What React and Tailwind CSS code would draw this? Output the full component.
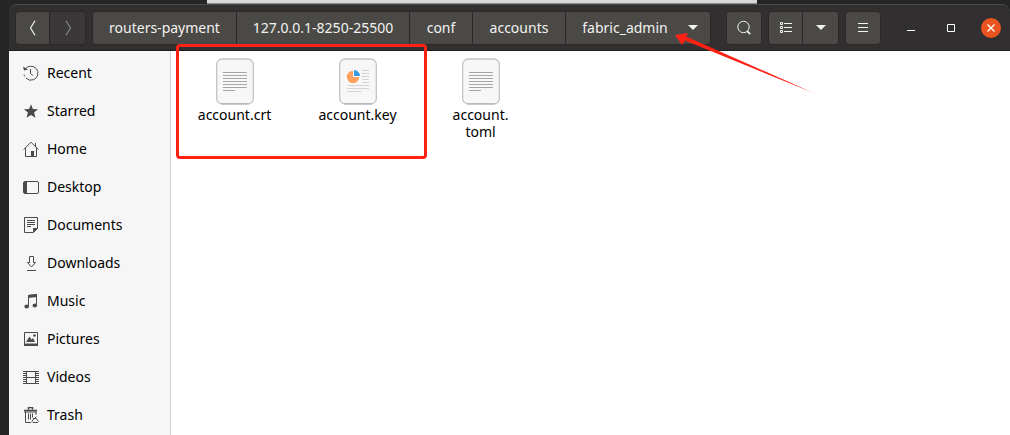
import React, { useState } from 'react';

const crumbs = [
  { name: 'routers-payment', width: 'w-36' },
  { name: '127.0.0.1-8250-25500', width: 'w-[173px]' },
  { name: 'conf', width: 'w-[63px]' },
  { name: 'accounts', width: 'w-[93px]' },
];

const places = [
  {
    name: 'Recent',
    icon: (
      <>
        <path d="M2.2 4.2A7 7 0 1 1 1 9" fill="none" stroke="currentColor" strokeDasharray="34 2 2 2" />
        <path d="M0 1.5 1 5.5 5 4.5z" fill="currentColor" />
        <path d="M7.5 4v4.5l2.5 2" fill="none" stroke="currentColor" />
      </>
    ),
  },
  {
    name: 'Starred',
    icon: <path d="M8 1.2 9.9 5.9 15 6.200 11.100 9.500 12.400 14.700 8 11.900 3.600 14.700 4.900 9.500 1 6.200 6.100 5.900z" fill="currentColor" />,
  },
  {
    name: 'Home',
    icon: (
      <>
        <path d="M.7 8.5 8 1.2 15.3 8.5M2.5 7v8.5h11V7M12.5 2v4" fill="none" stroke="currentColor" />
        <path d="M8 10h3v5.500H8z" fill="currentColor" />
      </>
    ),
  },
  {
    name: 'Desktop',
    icon: (
      <>
        <rect x=".5" y="2.5" width="15" height="12" rx="1.5" fill="none" stroke="currentColor" />
        <path d="M1 3h3v11H1z" fill="currentColor" />
      </>
    ),
  },
  {
    name: 'Documents',
    icon: (
      <>
        <path d="M1.500.5h13v11l-4 4h-9z" fill="none" stroke="currentColor" />
        <path d="M10 15.500V11h5z" fill="currentColor" />
        <path d="M4 3.500h8M4 5.500h8M4 7.500h8M4 9.500h4" stroke="currentColor" />
      </>
    ),
  },
  {
    name: 'Downloads',
    icon: <path d="M6.500 1.500h4v6h2L8.500 12 4.500 7.500h2zM4 15.500h9" fill="none" stroke="currentColor" />,
  },
  {
    name: 'Music',
    icon: (
      <>
        <path d="M5.500 13V2.500l8-1V12" fill="none" stroke="currentColor" />
        <path d="M5 2l9-1v3L5 5z" fill="currentColor" />
        <ellipse cx="3.700" cy="13.500" rx="2.300" ry="1.900" fill="currentColor" />
        <ellipse cx="11.800" cy="12.500" rx="2.300" ry="1.900" fill="currentColor" />
      </>
    ),
  },
  {
    name: 'Pictures',
    icon: (
      <>
        <path d="M1.500 1.500h13v13h-13z" fill="none" stroke="currentColor" />
        <path d="M1 12.500h14V15H1z" fill="currentColor" />
        <path d="M3 11 6.500 5.500 8.500 8.500 10 7 12 11z" fill="currentColor" />
        <circle cx="11.500" cy="4.500" r="1.300" fill="currentColor" />
      </>
    ),
  },
  {
    name: 'Videos',
    icon: (
      <>
        <path d="M3.500 2.500h9v12h-9zM3 8.500h10M1 2.500h14M1 14.500h14" fill="none" stroke="currentColor" />
        <path d="M1.500 2v13M14.500 2v13" stroke="currentColor" strokeWidth="3" strokeDasharray="1 1" />
      </>
    ),
  },
  {
    name: 'Trash',
    icon: (
      <>
        <path d="M1 3.500h13M5.500 2.500v-2h4v2" fill="none" stroke="currentColor" strokeWidth="1.500" />
        <path d="M1 5h13M2.500 5v10.500H8M13 5v3M5.500 6.500v6M7.500 6.500v6M9.500 6.500v4" fill="none" stroke="currentColor" />
        <path d="M10 11.500h3.500M10.500 12 9 14.500 10 15.500h4.500l1-1-2-2.500M12 11l1.500-1.500" fill="none" stroke="currentColor" />
      </>
    ),
  },
];

const files = [
  { name: 'account.crt', lines: ['account.crt'], type: 'text' },
  { name: 'account.key', lines: ['account.key'], type: 'chart' },
  { name: 'account.toml', lines: ['account.', 'toml'], type: 'text' },
];

const barButton = 'flex h-8 items-center justify-center bg-[#4a4946] text-[#f2f2f2]';
const group = 'flex shrink-0 overflow-hidden rounded border border-[#2a2828] divide-x divide-[#2a2828]';

const CaretIcon = () => (
  <svg width="10" height="6" viewBox="0 0 10 6" aria-hidden="true">
    <path d="M0 0h10L5 5z" fill="currentColor" />
  </svg>
);

const FileIcon = ({ type }) => (
  <svg width="38" height="47" viewBox="0 0 38 47" aria-hidden="true">
    <rect x=".7" y="1" width="36.600" height="45" rx="5.500" fill="#f7f7f7" stroke="#c3c3c3" strokeWidth="1.300" />
    <path d="M5 45.800h28" stroke="#b2b2b2" />
    {type === 'text' ? (
      <path d="M7 14.500h24M7 17.500h24M7 20.500h24M7 23.500h24M7 26.500h24M7 29.500h24M7 32.500h12" stroke="#a5a5a5" />
    ) : (
      <>
        <path d="M14 12.800a6.200 6.200 0 1 0 6.200 6.200H14z" fill="#ffa25f" />
        <path d="M15 12a6 6 0 0 1 6 6h-6z" fill="#369de2" />
        <path d="M23 12.500h7M23 15.500h7M23 18.500h7M23 21.500h7M23 24.500h7M9 27.500h21M8 30.500h22M8 33.500h14" stroke="#d4d4d4" />
      </>
    )}
  </svg>
);

const HeaderBar = () => (
  <header className="flex h-[47px] items-center rounded-t-lg border-t border-[#4b4a4a] border-b border-b-[#1f1d1d] bg-[#322f30] pr-[9px] pl-1.5">
    <nav className={group} aria-label="History">
      <button className={`${barButton} w-[34px]`} aria-label="Back">
        <svg width="8" height="16" viewBox="0 0 8 16" aria-hidden="true">
          <path d="M6 .8 1.500 8 6 15.200" fill="none" stroke="currentColor" strokeWidth="1.200" />
        </svg>
      </button>
      <button className="flex h-8 w-[35px] items-center justify-center bg-[#3a3838] text-[#858383]" aria-label="Forward" disabled>
        <svg width="8" height="16" viewBox="0 0 8 16" aria-hidden="true">
          <path d="M2 .8 6.500 8 2 15.200" fill="none" stroke="currentColor" strokeWidth="1.200" />
        </svg>
      </button>
    </nav>

    <nav className={`${group} ml-1.5`} aria-label="Path">
      {crumbs.map((crumb) => (
        <button key={crumb.name} className={`${barButton} ${crumb.width}`}>
          {crumb.name}
        </button>
      ))}
      <button className={`${barButton} w-36 gap-5 pl-1`}>
        fabric_admin
        <CaretIcon />
      </button>
    </nav>

    <div className="ml-auto flex shrink-0 items-center gap-1.5">
      <div className={group}>
        <button className={`${barButton} w-[34px]`} aria-label="Search">
          <svg width="16" height="16" viewBox="0 0 16 16" aria-hidden="true">
            <circle cx="7.500" cy="7" r="5.700" fill="none" stroke="currentColor" />
            <path d="m11.200 11.200 3 3" stroke="currentColor" strokeWidth="1.800" />
          </svg>
        </button>
      </div>
      <div className={group}>
        <button className={`${barButton} w-[34px]`} aria-label="List view">
          <svg width="14" height="12" viewBox="0 0 14 12" aria-hidden="true">
            <path d="M1.500.5h2v2h-2zM1.500 4.500h2v2h-2zM1.500 8.500h2v2h-2zM5 1.500h8M5 5.500h8M5 9.500h8" fill="none" stroke="currentColor" />
          </svg>
        </button>
        <button className={`${barButton} w-[35px]`} aria-label="View options">
          <CaretIcon />
        </button>
      </div>
      <div className={group}>
        <button className={`${barButton} w-[34px]`} aria-label="Menu">
          <svg width="10" height="10" viewBox="0 0 10 10" aria-hidden="true">
            <path d="M0 .5h10M0 4.500h10M0 8.500h10" stroke="currentColor" />
          </svg>
        </button>
      </div>
    </div>

    <div className="ml-5 flex shrink-0 items-center gap-5 text-white">
      <button className="flex size-5 items-center justify-center" aria-label="Minimize">
        <svg width="8" height="8" viewBox="0 0 8 8" aria-hidden="true">
          <path d="M0 6.500h8" stroke="currentColor" />
        </svg>
      </button>
      <button className="flex size-5 items-center justify-center" aria-label="Maximize">
        <svg width="8" height="8" viewBox="0 0 8 8" aria-hidden="true">
          <path d="M.5.5h7v7h-7z" fill="none" stroke="currentColor" />
        </svg>
      </button>
      <button className="flex size-5 items-center justify-center rounded-full bg-[#e95420]" aria-label="Close">
        <svg width="8" height="8" viewBox="0 0 8 8" aria-hidden="true">
          <path d="m.5.5 7 7m0-7-7 7" stroke="currentColor" strokeWidth="1.300" />
        </svg>
      </button>
    </div>
  </header>
);

const Sidebar = () => (
  <aside className="w-[162px] shrink-0 border-r border-[#d5d5d5] bg-[#f6f6f6] pt-[3px]">
    {places.map((place) => (
      <button key={place.name} className="flex h-[38px] w-full items-center gap-2 pl-3.5 text-black">
        <svg width="16" height="16" viewBox="0 0 16 16" className="text-[#4a4a4a]" aria-hidden="true">
          {place.icon}
        </svg>
        {place.name}
      </button>
    ))}
  </aside>
);

const App = () => {
  const [selected, setSelected] = useState(null);

  return (
    <div className="flex min-h-screen flex-col bg-[#252525] font-['Noto_Sans',sans-serif] text-sm">
      <div className="mr-[253px] ml-[207px] h-1 border-b border-[#8a8a8a] bg-[#d8d8d8]" />
      <div className="relative ml-[9px] flex grow flex-col">
        <HeaderBar />
        <div className="flex grow">
          <Sidebar />
          <main className="flex grow items-start bg-white pt-[7px] pl-0.5">
            {files.map((file) => (
              <button
                key={file.name}
                onClick={() => setSelected(file.name)}
                aria-pressed={selected === file.name}
                className="flex w-[123px] flex-col items-center gap-px leading-[17px] text-black"
              >
                <FileIcon type={file.type} />
                <span>
                  {file.lines.map((line) => (
                    <span key={line} className="block">{line}</span>
                  ))}
                </span>
              </button>
            ))}
          </main>
        </div>

        {/* Annotations */}
        <div className="pointer-events-none absolute top-10 left-[167px] h-[115px] w-[251px] rounded-sm border-3 border-[#ff2114]" />
        <svg className="pointer-events-none absolute top-7 left-[665px]" width="144" height="64" viewBox="0 0 144 64" aria-hidden="true">
          <defs>
            <linearGradient id="tail">
              <stop offset=".85" stopColor="#ff2114" />
              <stop offset="1" stopColor="#ff2114" stopOpacity=".5" />
            </linearGradient>
          </defs>
          <path d="M1 3 14 1 12 4.500 142 62 11 8.500 8 13z" fill="url(#tail)" />
        </svg>
      </div>
    </div>
  );
};

export default App;
